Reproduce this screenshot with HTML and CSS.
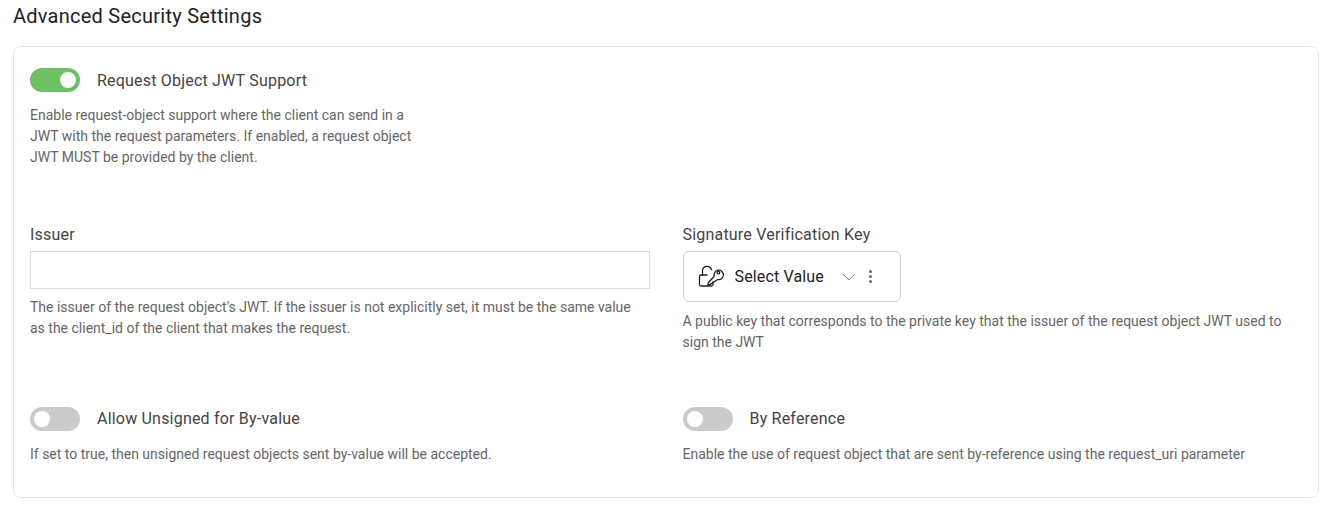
FILE: index.html
```html
<!DOCTYPE html>
<html lang="en">
<head>
    <meta charset="UTF-8">
    <title>Advanced Security Settings</title>
    <link rel="stylesheet" href="styles.css">
</head>
<body>
    <h2 class="section-title">Advanced Security Settings</h2>
    <div class="card">
        <div class="top-row">
            <div class="switch-row">
                <span class="switch on"></span>
                <span class="switch-label">Request Object JWT Support</span>
            </div>
            <p class="help">Enable request-object support where the client can send in a<br>JWT with the request parameters. If enabled, a request object<br>JWT MUST be provided by the client.</p>
        </div>
        <div class="fields">
            <div class="field">
                <label class="field-label">Issuer</label>
                <input class="text-input" type="text">
                <p class="help">The issuer of the request object's JWT. If the issuer is not explicitly set, it must be the same value as the client_id of the client that makes the request.</p>
            </div>
            <div class="field">
                <label class="field-label">Signature Verification Key</label>
                <div class="select">
                    <svg class="key-icon" width="28" height="26" viewBox="0 0 28 26" fill="none" stroke="#222" stroke-width="1.3" stroke-linecap="round" stroke-linejoin="round">
                        <path d="M4.5 11V7a4.6 4.6 0 0 1 9-1.4"/>
                        <path d="M9 11H3a1.5 1.5 0 0 0-1.5 1.5v8A1.5 1.5 0 0 0 3 22h10.5a1.5 1.5 0 0 0 1.5-1.5V18"/>
                        <path d="M12 20.6l-2.2.5.5-2.4 5.9-6.5a4.7 4.7 0 1 1 3.6 3.3z"/>
                        <circle cx="20.4" cy="8.6" r="1.3"/>
                    </svg>
                    <span class="select-value">Select Value</span>
                    <svg class="chevron" width="14" height="8" viewBox="0 0 14 8" fill="none" stroke="#8a8a8a" stroke-width="1">
                        <path d="M1 1l6 6 6-6"/>
                    </svg>
                    <span class="dots"><i></i><i></i><i></i></span>
                </div>
                <p class="help">A public key that corresponds to the private key that the issuer of the request object JWT used to sign the JWT</p>
            </div>
            <div class="field">
                <div class="switch-row">
                    <span class="switch"></span>
                    <span class="switch-label">Allow Unsigned for By-value</span>
                </div>
                <p class="help">If set to true, then unsigned request objects sent by-value will be accepted.</p>
            </div>
            <div class="field">
                <div class="switch-row">
                    <span class="switch"></span>
                    <span class="switch-label">By Reference</span>
                </div>
                <p class="help">Enable the use of request object that are sent by-reference using the request_uri parameter</p>
            </div>
        </div>
    </div>
</body>
</html>
```

FILE: styles.css
```css
* { margin: 0; padding: 0; box-sizing: border-box; }
body {
    font-family: Roboto, Arial, sans-serif;
    background: #fff;
    color: #333;
    padding: 5px 16px 0 13px;
}
.section-title {
    font-size: 20px;
    font-weight: 400;
    letter-spacing: 0.25px;
    line-height: 22px;
    color: #222;
    margin-bottom: 19px;
}
.card {
    height: 452px;
    border: 1px solid #e6e6e6;
    border-radius: 8px;
    padding: 21px 16px 0 16px;
}
.switch-row { display: flex; align-items: center; gap: 17px; height: 24px; }
.switch {
    width: 50px;
    height: 24px;
    border-radius: 12px;
    background: #cbcbcb;
    position: relative;
    flex: none;
}
.switch::after {
    content: "";
    position: absolute;
    top: 4px;
    left: 4px;
    width: 16px;
    height: 16px;
    border-radius: 50%;
    background: #fff;
}
.switch.on { background: #6cc164; }
.switch.on::after { left: 30px; }
.switch-label { font-size: 16px; letter-spacing: 0.2px; color: #444; line-height: 26px; }
.help { font-size: 14px; line-height: 21px; color: #666; }
.top-row { height: 155px; }
.top-row .switch-label { padding-top: 2px; }
.top-row .help { margin-top: 13px; }
.fields {
    display: grid;
    grid-template-columns: 620px 620px;
    column-gap: 32.5px;
    grid-template-rows: 184px auto;
}
.field .help { padding-right: 10px; }
.field-label { display: block; font-size: 16px; letter-spacing: 0.2px; line-height: 24px; color: #444; margin-bottom: 4px; }
.text-input {
    display: block;
    width: 100%;
    height: 38px;
    border: 1px solid #dcdcdc;
    outline: none;
}
.text-input + .help { margin-top: 8px; }
.select + .help { margin-top: 9px; }
.switch-row + .help { margin-top: 13px; }
.select {
    display: flex;
    align-items: center;
    width: 218px;
    height: 51px;
    border: 1px solid #cfcfcf;
    border-radius: 6px;
    padding-left: 14px;
}
.select-value { font-size: 16px; letter-spacing: 0.15px; color: #222; margin-left: 9px; }
.chevron { margin-left: 18px; }
.dots { display: flex; flex-direction: column; gap: 2px; margin-left: 13px; }
.dots i { display: block; width: 3px; height: 3px; border-radius: 50%; background: #666; }
```
